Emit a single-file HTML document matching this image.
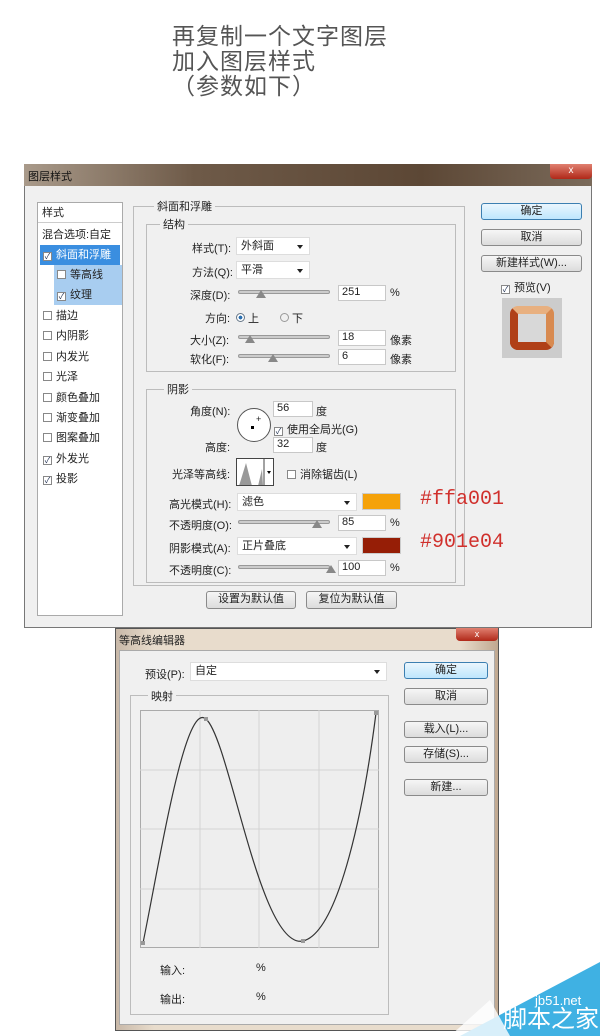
<!DOCTYPE html>
<html><head><meta charset="utf-8"><style>
*{margin:0;padding:0;box-sizing:border-box}
body{width:600px;height:1036px;background:#fff;position:relative;overflow:hidden;font-family:"Liberation Sans","Noto Sans CJK SC",sans-serif;font-size:11px;color:#222}
.a{position:absolute;white-space:nowrap}
.btn{position:absolute;border:1px solid #8a8a8a;border-radius:3px;background:linear-gradient(#f6f6f6,#dcdcdc);text-align:center;font-size:11px;line-height:15px}
.box{position:absolute;border:1px solid #c8c8c8;background:#fff}
.grp{position:absolute;border:1px solid #bcbcbc}
.gl{position:absolute;background:#f0f0f0;padding:0 3px;font-size:11px}
.cb{display:inline-block;width:9px;height:9px;border:1px solid #888;background:#fff;vertical-align:-1px;margin-right:4px;font-size:8px;line-height:7px;text-align:center;color:#235}
.sl{position:absolute;height:4px;border:1px solid #999;border-radius:2px;background:#ccc}
.tri{position:absolute;width:0;height:0;border-left:5px solid transparent;border-right:5px solid transparent;border-bottom:8px solid #888}
.dd{position:absolute;background:#fff;border:1px solid #ddd;font-size:11px;line-height:16px;padding-left:4px}
.dd:after{content:"";position:absolute;right:6px;top:7px;border-left:3px solid transparent;border-right:3px solid transparent;border-top:4px solid #222}
.li{position:absolute;left:40px;width:80px;height:20px;line-height:20px;padding-left:3px;font-size:11px}
</style></head><body>
<div class="a" style="left:172px;top:24px;font-size:23px;line-height:25px;color:#555;letter-spacing:1px">再复制一个文字图层<br>加入图层样式<br>（参数如下）</div>

<!-- main dialog -->
<div class="a" style="left:24px;top:164px;width:568px;height:464px;background:#f0f0f0;border:1px solid #777"></div>
<div class="a" style="left:24px;top:164px;width:568px;height:22px;background:linear-gradient(90deg,#a99a8a,#6e5a48 30%,#5c4735 70%,#7a6a5a)"></div>
<div class="a" style="left:28px;top:168px;font-size:11px;color:#111">图层样式</div>
<div class="a" style="left:550px;top:164px;width:42px;height:15px;background:linear-gradient(#e08070,#b02818);border-radius:0 0 4px 4px;color:#fff;text-align:center;font-size:10px;line-height:14px">x</div>

<div class="a" style="left:37px;top:202px;width:86px;height:414px;background:#fff;border:1px solid #aaa"></div>
<div class="a" style="left:42px;top:204px">样式</div>
<div class="a" style="left:38px;top:222px;width:84px;border-top:1px solid #ccc"></div>
<div class="a" style="left:42px;top:226px">混合选项:自定</div>
<div class="li" style="top:245px;background:#3a8ee0;color:#fff"><span class="cb">✓</span>斜面和浮雕</div>
<div class="li" style="top:265px;left:54px;width:68px;background:#a8cdf0"><span class="cb"></span>等高线</div>
<div class="li" style="top:285px;left:54px;width:68px;background:#a8cdf0"><span class="cb">✓</span>纹理</div>
<div class="li" style="top:306px"><span class="cb"></span>描边</div>
<div class="li" style="top:326px"><span class="cb"></span>内阴影</div>
<div class="li" style="top:347px"><span class="cb"></span>内发光</div>
<div class="li" style="top:367px"><span class="cb"></span>光泽</div>
<div class="li" style="top:388px"><span class="cb"></span>颜色叠加</div>
<div class="li" style="top:408px"><span class="cb"></span>渐变叠加</div>
<div class="li" style="top:428px"><span class="cb"></span>图案叠加</div>
<div class="li" style="top:449px"><span class="cb">✓</span>外发光</div>
<div class="li" style="top:469px"><span class="cb">✓</span>投影</div>

<div class="grp" style="left:133px;top:206px;width:332px;height:380px"></div>
<div class="gl" style="left:154px;top:198px">斜面和浮雕</div>
<div class="grp" style="left:146px;top:224px;width:310px;height:148px"></div>
<div class="gl" style="left:160px;top:216px">结构</div>
<div class="a" style="left:192px;top:240px">样式(T):</div><div class="dd" style="left:236px;top:237px;width:74px">外斜面</div>
<div class="a" style="left:192px;top:264px">方法(Q):</div><div class="dd" style="left:236px;top:261px;width:74px">平滑</div>
<div class="a" style="left:190px;top:287px">深度(D):</div><div class="sl" style="left:238px;top:290px;width:92px"></div><div class="tri" style="left:256px;top:290px"></div><div class="box" style="left:338px;top:285px;width:48px;height:16px;padding-left:3px">251</div><div class="a" style="left:390px;top:287px">%</div>
<div class="a" style="left:205px;top:310px">方向:</div><div class="a" style="left:236px;top:310px"><span style="display:inline-block;width:9px;height:9px;border-radius:50%;border:1px solid #678;background:radial-gradient(#2a6fb0 35%,#fff 40%)"></span> 上</div><div class="a" style="left:280px;top:310px"><span style="display:inline-block;width:9px;height:9px;border-radius:50%;border:1px solid #999"></span> 下</div>
<div class="a" style="left:190px;top:332px">大小(Z):</div><div class="sl" style="left:238px;top:335px;width:92px"></div><div class="tri" style="left:245px;top:335px"></div><div class="box" style="left:338px;top:330px;width:48px;height:16px;padding-left:3px">18</div><div class="a" style="left:390px;top:332px">像素</div>
<div class="a" style="left:190px;top:351px">软化(F):</div><div class="sl" style="left:238px;top:354px;width:92px"></div><div class="tri" style="left:268px;top:354px"></div><div class="box" style="left:338px;top:349px;width:48px;height:16px;padding-left:3px">6</div><div class="a" style="left:390px;top:351px">像素</div>

<div class="grp" style="left:146px;top:389px;width:310px;height:194px"></div>
<div class="gl" style="left:164px;top:381px">阴影</div>
<div class="a" style="left:190px;top:403px">角度(N):</div>
<div class="a" style="left:237px;top:408px;width:34px;height:34px;border:1px solid #555;border-radius:50%;background:#fff"></div>
<div class="a" style="left:251px;top:426px;width:3px;height:3px;background:#000"></div>
<div class="a" style="left:256px;top:414px;font-size:9px">+</div>
<div class="box" style="left:273px;top:401px;width:40px;height:16px;padding-left:3px">56</div><div class="a" style="left:316px;top:403px">度</div>
<div class="a" style="left:274px;top:421px"><span class="cb">✓</span>使用全局光(G)</div>
<div class="a" style="left:205px;top:439px">高度:</div><div class="box" style="left:273px;top:437px;width:40px;height:16px;padding-left:3px">32</div><div class="a" style="left:316px;top:439px">度</div>
<div class="a" style="left:172px;top:466px">光泽等高线:</div>
<div class="a" style="left:236px;top:458px;width:38px;height:28px;border:1px solid #444;background:#fff;overflow:hidden"><svg width="38" height="28"><path d="M2 27 L9 4 L15 27 L21 27 L25 10 L26 27Z" fill="#999"/><line x1="27" y1="0" x2="27" y2="28" stroke="#444"/><path d="M30 12 L34 12 L32 15Z" fill="#000"/></svg></div>
<div class="a" style="left:287px;top:466px"><span class="cb"></span>消除锯齿(L)</div>
<div class="a" style="left:169px;top:496px">高光模式(H):</div><div class="dd" style="left:237px;top:493px;width:120px;height:18px">滤色</div>
<div class="a" style="left:362px;top:493px;width:39px;height:17px;background:#f5a20a;border:1px solid #ccc"></div>
<div class="a" style="left:420px;top:488px;font-size:20px;color:#d0302c;font-family:'Liberation Mono',monospace">#ffa001</div>
<div class="a" style="left:169px;top:517px">不透明度(O):</div><div class="sl" style="left:238px;top:520px;width:92px"></div><div class="tri" style="left:312px;top:520px"></div><div class="box" style="left:338px;top:515px;width:48px;height:16px;padding-left:3px">85</div><div class="a" style="left:390px;top:517px">%</div>
<div class="a" style="left:169px;top:540px">阴影模式(A):</div><div class="dd" style="left:237px;top:537px;width:120px;height:18px">正片叠底</div>
<div class="a" style="left:362px;top:537px;width:39px;height:17px;background:#961e06;border:1px solid #ccc"></div>
<div class="a" style="left:420px;top:531px;font-size:20px;color:#d0302c;font-family:'Liberation Mono',monospace">#901e04</div>
<div class="a" style="left:169px;top:562px">不透明度(C):</div><div class="sl" style="left:238px;top:565px;width:92px"></div><div class="tri" style="left:326px;top:565px"></div><div class="box" style="left:338px;top:560px;width:48px;height:16px;padding-left:3px">100</div><div class="a" style="left:390px;top:562px">%</div>
<div class="btn" style="left:206px;top:591px;width:90px;height:18px">设置为默认值</div>
<div class="btn" style="left:306px;top:591px;width:91px;height:18px">复位为默认值</div>

<div class="btn" style="left:481px;top:203px;width:101px;height:17px;border-color:#3c7fb1;background:linear-gradient(#eaf6fd,#bee6fd)">确定</div>
<div class="btn" style="left:481px;top:229px;width:101px;height:17px">取消</div>
<div class="btn" style="left:481px;top:255px;width:101px;height:17px">新建样式(W)...</div>
<div class="a" style="left:501px;top:279px;font-size:11px"><span class="cb">✓</span>预览(V)</div>
<div class="a" style="left:502px;top:298px;width:60px;height:60px;background:#ccc"><div style="position:absolute;left:8px;top:8px;width:44px;height:44px;border:8px solid #b04018;border-top-color:#e8b080;border-right-color:#d88a50;border-radius:8px;background:#d8d8d8"></div></div>

<!-- contour editor -->
<div class="a" style="left:115px;top:628px;width:384px;height:403px;background:linear-gradient(90deg,#c8b8a8,#e8dccc 10%,#e8dccc 90%,#c0a890);border:1px solid #555"></div>
<div class="a" style="left:119px;top:632px;font-size:11px">等高线编辑器</div>
<div class="a" style="left:456px;top:628px;width:42px;height:13px;background:linear-gradient(#e08070,#b02818);border-radius:0 0 4px 4px;color:#fff;text-align:center;font-size:9px;line-height:12px">x</div>
<div class="a" style="left:119px;top:650px;width:376px;height:375px;background:#f0f0f0;border:1px solid #aaa"></div>
<div class="a" style="left:145px;top:666px">预设(P):</div><div class="dd" style="left:190px;top:662px;width:197px;height:19px">自定</div>
<div class="grp" style="left:130px;top:695px;width:259px;height:320px"></div>
<div class="gl" style="left:148px;top:688px">映射</div>
<div class="a" style="left:140px;top:710px;width:239px;height:238px;border:1px solid #aaa;background:#eee"></div>
<svg class="a" style="left:140px;top:710px" width="239" height="238"><g stroke="#d4d4d4"><line x1="60" y1="0" x2="60" y2="238"/><line x1="119" y1="0" x2="119" y2="238"/><line x1="179" y1="0" x2="179" y2="238"/><line x1="0" y1="60" x2="239" y2="60"/><line x1="0" y1="119" x2="239" y2="119"/><line x1="0" y1="179" x2="239" y2="179"/></g>
<path d="M3 233 C20 150 45 -10 66 9 C90 30 120 240 163 231 C200 222 225 90 236 3" fill="none" stroke="#333" stroke-width="1.2"/>
<rect x="1" y="231" width="4" height="4" fill="#999"/><rect x="64" y="7" width="4" height="4" fill="#999"/><rect x="161" y="229" width="4" height="4" fill="#999"/><rect x="234" y="1" width="4" height="4" fill="#999"/></svg>
<div class="a" style="left:160px;top:962px">输入:</div><div class="a" style="left:256px;top:962px">%</div>
<div class="a" style="left:160px;top:991px">输出:</div><div class="a" style="left:256px;top:991px">%</div>
<div class="btn" style="left:404px;top:662px;width:84px;height:17px;border-color:#3c7fb1;background:linear-gradient(#eaf6fd,#bee6fd)">确定</div>
<div class="btn" style="left:404px;top:688px;width:84px;height:17px">取消</div>
<div class="btn" style="left:404px;top:721px;width:84px;height:17px">载入(L)...</div>
<div class="btn" style="left:404px;top:746px;width:84px;height:17px">存储(S)...</div>
<div class="btn" style="left:404px;top:779px;width:84px;height:17px">新建...</div>

<svg class="a" style="left:450px;top:960px" width="150" height="76"><path d="M10 76 L150 2 L150 76Z" fill="#3fb1e3"/><path d="M0 76 L40 40 L60 76Z" fill="#fff" opacity=".8"/></svg>
<div class="a" style="left:535px;top:993px;color:#fff;font-size:13px">jb51.net</div>
<div class="a" style="left:503px;top:1006px;color:#fff;font-size:24px;line-height:28px">脚本之家</div>
</body></html>
